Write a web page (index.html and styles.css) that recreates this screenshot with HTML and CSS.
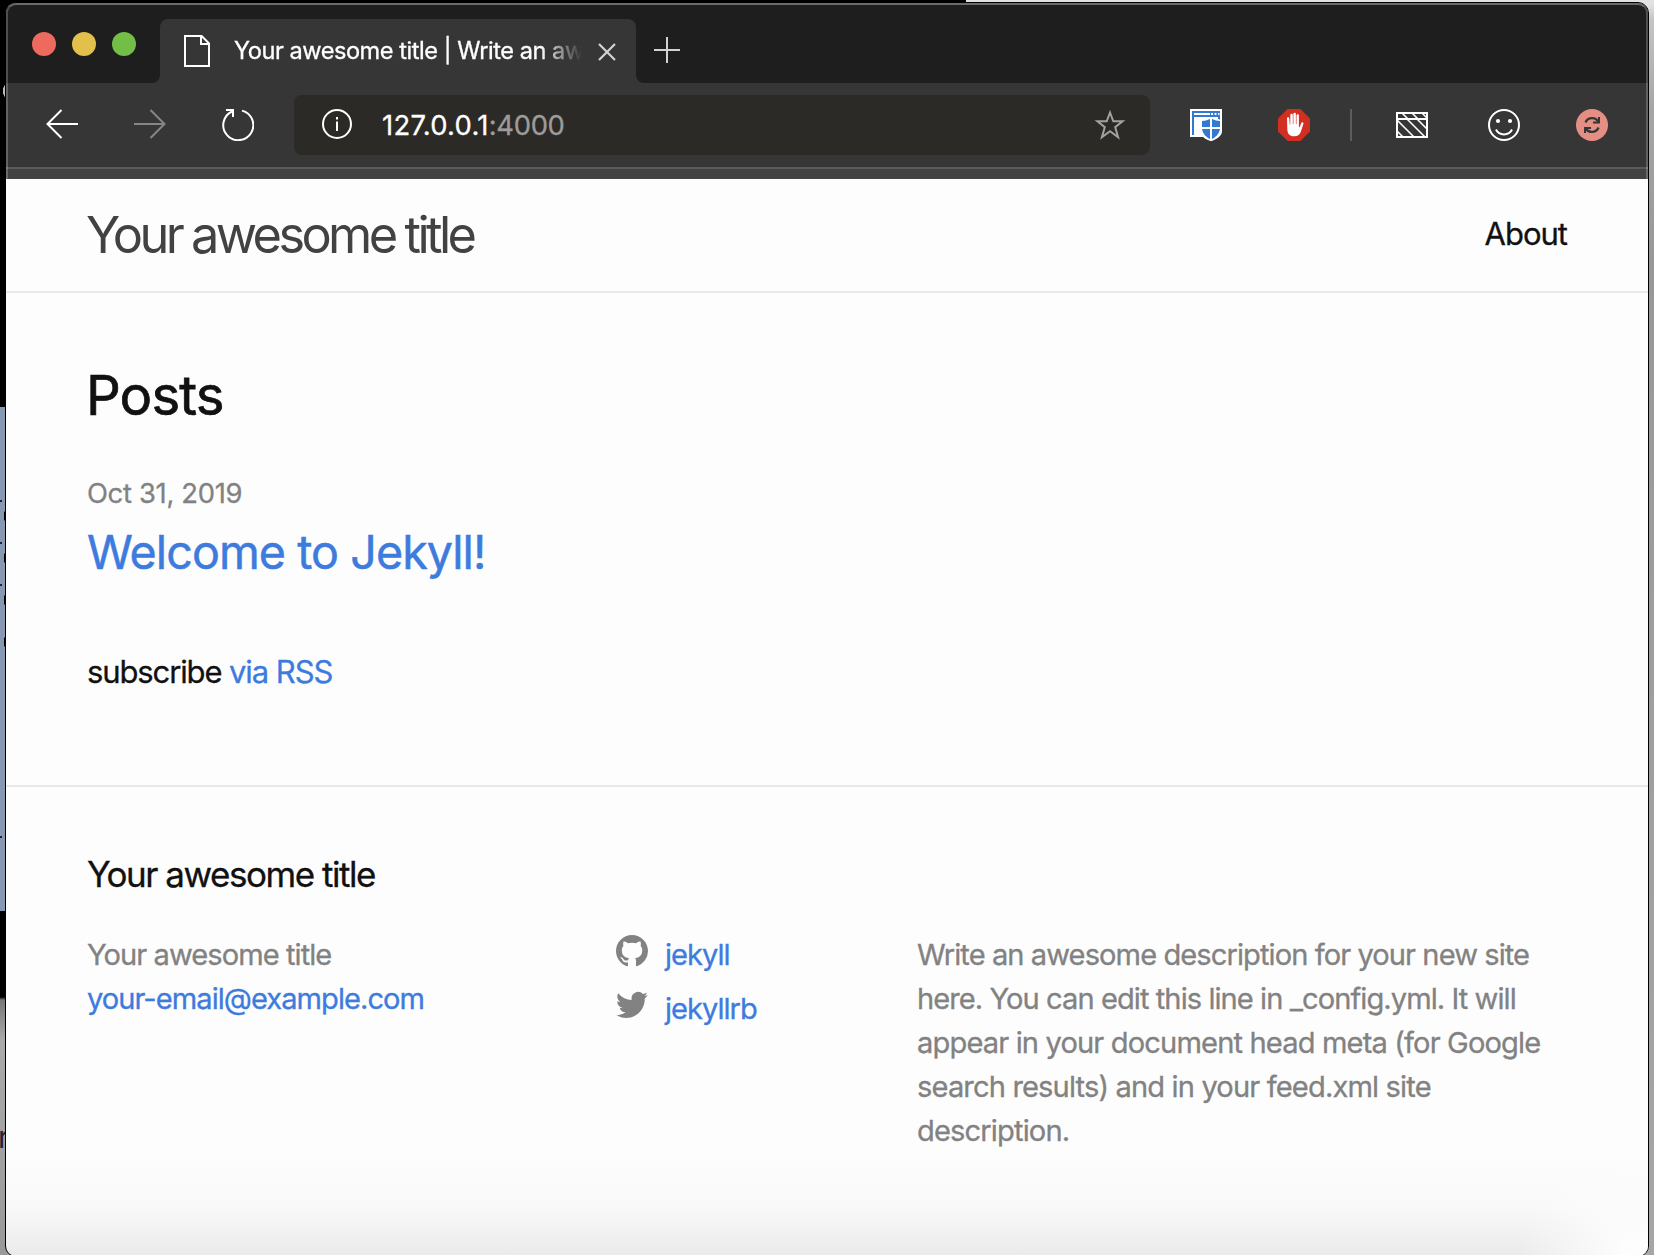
FILE: index.html
```html
<!DOCTYPE html>
<html lang="en">
<head>
<meta charset="utf-8">
<title>Your awesome title | Write an awesome description for your new site here.</title>
<link rel="stylesheet" href="styles.css">
</head>
<body>
<div class="backdrop-left"><span class="backdrop-text">r</span></div>
<div class="window">
  <div class="chrome">
    <div class="tabstrip">
      <div class="lights">
        <span class="light red"></span><span class="light yellow"></span><span class="light green"></span>
      </div>
      <div class="tab-slot">
        <div class="tab">
          <svg class="doc" width="26" height="32" viewBox="0 0 26 32" fill="none" stroke="#fff" stroke-width="2"><path d="M1 1h16.6L25 8.4V31H1z"/><path d="M17 1v8h8"/></svg>
          <span class="tab-title">Your awesome title | Write an aw</span>
          <svg class="close" width="18" height="18" viewBox="0 0 18 18" stroke="#d2d2d2" stroke-width="2.2"><path d="M1 1l16 16M17 1L1 17"/></svg>
        </div>
      </div>
      <div class="strip-rest">
        <svg width="26" height="26" viewBox="0 0 26 26" stroke="#d2d2d2" stroke-width="2"><path d="M13 0v26M0 13h26"/></svg>
      </div>
    </div>
    <div class="toolbar">
      <div class="nav">
        <svg width="32" height="32" viewBox="0 0 32 32" fill="none" stroke="#fff" stroke-width="2"><path d="M32 15H2M15.5 1L1.5 15l14 14"/></svg>
        <svg width="32" height="32" viewBox="0 0 32 32" fill="none" stroke="#868686" stroke-width="2"><path d="M0 15h30M16.500 1l14 14-14 14"/></svg>
        <svg width="32" height="32" viewBox="0 0 32 32" fill="none" stroke="#fff" stroke-width="2"><path d="M20 1.600A15 15 0 1 1 10 2.500"/><path d="M4 1h7v7"/></svg>
      </div>
      <div class="address">
        <svg width="30" height="30" viewBox="0 0 30 30" fill="none" stroke="#fff" stroke-width="2"><circle cx="15" cy="15" r="14"/><path d="M15 12.500v9.500M15 8v2.500"/></svg>
        <span class="url">127.0.0.1<span class="port">:4000</span></span>
        <svg class="star" width="32" height="32" viewBox="0 0 32 32" fill="none" stroke="#a2a2a2" stroke-width="2"><path d="M16 3.500l3.300 8.800h9.300l-7.400 5.900 2.900 10L16 22.300l-8.100 5.900 2.900-10-7.400-5.900h9.300z"/></svg>
      </div>
      <svg class="guard" width="32" height="32" viewBox="0 0 32 32"><path fill="#fff" d="M0 0h32v22c0 5-5 8-11 10-4-1-7-3-8-4H0z"/><path fill="#363636" d="M0 28h13l3 4H0z"/><path fill="#3279d2" d="M2 2h28v9l-2-1V8H4v18H2z"/><path fill="#fff" d="M4 4h16v2H4zM21 4h2v2h-2zM24.500 4h2v2h-2zM28 4h1.500v2H28z"/><path fill="#fff" d="M4 8h9v18H4z"/><path fill="#fff" d="M2 26h11v2H2z"/><path fill="#fff" d="M21 8l11 3.500V20c0 6-5 10-11 12-6-2-11-6-11-12v-8.500z"/><path fill="#3279d2" d="M20 10v8h-8v-6c3 0 5-1 8-2zM22 10c3 1 5 2 8 2v6h-8zM12 20h8v10c-4-2-7-5-8-10zM22 20h8c-1 5-4 8-8 10z"/></svg>
      <svg class="stop" width="32" height="32" viewBox="0 0 32 32"><path fill="#d22e22" d="M9.500 0h13L32 9.500v13L22.500 32h-13L0 22.500v-13z"/><path fill="#fff" d="M9 9.500c0-1.700 2.200-1.700 2.300 0l.5 6h.5V6c0-1.800 2.500-1.800 2.500 0v9h.6V5c0-1.700 2.500-1.700 2.500 0v10h.6V6.500c0-1.700 2.400-1.700 2.400 0V18l.7.200 1.600-4c.6-1.500 2.600-1 2.200.6L23.100 22c-1 3.300-3.200 5.300-7 5.300-4.600 0-6.600-2.600-6.800-7z"/></svg>
      <span class="divider"></span>
      <svg class="hatch" width="32" height="26" viewBox="0 0 32 26" fill="none" stroke="#fff"><path stroke-width="2" d="M1 1h30v24H1zM1 7h30"/><path stroke-width="1.600" d="M6 1l6 6M16 1l6 6M26 1l5 5M1 19l6 6M1 8l17 17M11 7l18 18M21 7l10 10"/></svg>
      <svg class="smile" width="32" height="32" viewBox="0 0 32 32" fill="none" stroke="#fff" stroke-width="2"><circle cx="16" cy="16" r="15"/><path d="M8 20.500c3 6.500 13 6.500 16 0"/><circle cx="10" cy="12" r="2.100" fill="#fff" stroke="none"/><circle cx="22" cy="12" r="2.100" fill="#fff" stroke="none"/></svg>
      <svg class="sync" width="32" height="32" viewBox="0 0 32 32"><circle cx="16" cy="16" r="16" fill="#e58f84"/><g fill="none" stroke="#363636" stroke-width="2.300"><path d="M9.500 13.500c2-5 9-6 12.500-1.500"/><path d="M22.500 18.500c-2 5-9 6-12.500 1.500"/></g><path fill="#363636" d="M24 8v6.500h-7v-2h3.500l1.500-1.500V8zM8 24v-6h7v2h-3.500L10 21.500V24z"/></svg>
    </div>
    <div class="bookmarks"></div>
  </div>
  <div class="page">
    <header class="site-header">
      <a class="site-title">Your awesome title</a>
      <a class="about">About</a>
    </header>
    <main class="content">
      <h2 class="posts">Posts</h2>
      <span class="date">Oct 31, 2019</span>
      <h3 class="post-link">Welcome to Jekyll!</h3>
      <p class="subscribe">subscribe <a>via RSS</a></p>
    </main>
    <footer class="site-footer">
      <h2 class="footer-heading">Your awesome title</h2>
      <div class="columns">
        <div class="contact"><span class="name">Your awesome title</span><a class="email">your-email@example.com</a></div>
        <ul class="social">
          <li><svg width="32" height="32" viewBox="0 0 16 16" fill="#828282"><path d="M8 0C3.580 0 0 3.580 0 8c0 3.540 2.290 6.530 5.470 7.590.4.070.55-.17.55-.38 0-.19-.01-.82-.01-1.490-2.010.37-2.530-.49-2.690-.94-.09-.23-.48-.94-.82-1.130-.28-.15-.68-.52-.01-.53.63-.01 1.080.58 1.230.82.72 1.210 1.870.87 2.330.66.07-.52.28-.87.51-1.070-1.780-.2-3.640-.89-3.640-3.950 0-.87.31-1.590.82-2.150-.08-.2-.36-1.020.08-2.120 0 0 .67-.21 2.200.82.64-.18 1.320-.27 2-.27.68 0 1.360.09 2 .27 1.530-1.040 2.200-.82 2.200-.82.44 1.100.16 1.920.08 2.120.51.56.82 1.270.82 2.150 0 3.070-1.870 3.750-3.650 3.950.29.25.54.73.54 1.480 0 1.070-.01 1.930-.01 2.200 0 .21.15.46.55.38A8.013 8.013 0 0 0 16 8c0-4.420-3.580-8-8-8z"/></svg><a>jekyll</a></li>
          <li><svg width="32" height="32" viewBox="0 .5 16 16" fill="#828282"><path d="M5.026 15c6.038 0 9.341-5.003 9.341-9.334 0-.14 0-.282-.006-.422A6.685 6.685 0 0 0 16 3.542a6.658 6.658 0 0 1-1.889.518 3.301 3.301 0 0 0 1.447-1.817 6.533 6.533 0 0 1-2.087.793A3.286 3.286 0 0 0 7.875 6.030a9.325 9.325 0 0 1-6.767-3.429 3.289 3.289 0 0 0 1.018 4.382A3.323 3.323 0 0 1 .64 6.575v.045a3.288 3.288 0 0 0 2.632 3.218 3.203 3.203 0 0 1-.865.115 3.230 3.230 0 0 1-.614-.057 3.283 3.283 0 0 0 3.067 2.277A6.588 6.588 0 0 1 .78 13.580a6.320 6.320 0 0 1-.78-.045A9.344 9.344 0 0 0 5.026 15z"/></svg><a>jekyllrb</a></li>
        </ul>
        <p class="description"><span>Write an awesome description for your new site</span> <span>here. You can edit this line in _config.yml. It will</span> <span>appear in your document head meta (for Google</span> <span>search results) and in your feed.xml site</span> <span>description.</span></p>
      </div>
    </footer>
  </div>
</div>
<div class="backdrop-right"></div>
</body>
</html>
```
FILE: styles.css
```css
* { box-sizing: border-box; margin: 0; padding: 0; }

body {
  display: grid;
  grid-template-columns: 5px 1644px 5px;
  width: 1654px;
  height: 1255px;
  overflow: hidden;
  font-family: Inter, "Liberation Sans", sans-serif;
  background: linear-gradient(90deg, #000 966px, #e2e2e2 966px) 0 0 / 100% 14px no-repeat,
    linear-gradient(90deg, #999 50%, #aaa 50%);
}
svg { display: block; flex: none; }
h2, h3 { font-weight: 400; }

/* desktop behind the window */
.backdrop-left {
  height: 1255px;
  padding-top: 1118px;
  background:
    radial-gradient(ellipse 2px 6px at 5px 91px, #bbb 90%, transparent) 0 0 / 5px 407px no-repeat,
    radial-gradient(ellipse 1.5px 5px at 5px 21px, #000 90%, transparent) 0 495px / 5px 42px no-repeat,
    radial-gradient(ellipse 1.5px 5px at 5px 21px, #000 90%, transparent) 0 537px / 5px 42px no-repeat,
    radial-gradient(ellipse 1.5px 5px at 5px 21px, #000 90%, transparent) 0 579px / 5px 42px no-repeat,
    radial-gradient(ellipse 1.5px 5px at 5px 21px, #000 90%, transparent) 0 621px / 5px 42px no-repeat,
    linear-gradient(#222, #222) 0 500px / 2px 2px no-repeat,
    linear-gradient(#222, #222) 0 542px / 2px 2px no-repeat,
    linear-gradient(#222, #222) 0 584px / 2px 2px no-repeat,
    linear-gradient(#222, #222) 0 836px / 2px 2px no-repeat,
    linear-gradient(#000 407px, #8798b3 407px 911px, #000 911px 997px, #777 1000px, #aaa 1040px, #999);
}
.backdrop-text { display: block; margin-left: -2px; font-size: 30px; line-height: 38px; color: #223; }
.backdrop-right { background: linear-gradient(#e2e2e2 4px, #c4c4c4 20px, #a5a5a5 110px, #989898 260px, #a6a6a6); }

.window {
  position: relative;
  margin-top: 2px;
  height: 1255px;
  border: 1px solid #000;
  border-radius: 11px;
  overflow: hidden;
  background: #fdfdfd;
}

/* browser chrome */
.chrome { position: relative; background: #363636; }
.chrome::after {
  content: "";
  position: absolute;
  inset: 0;
  border: 2px solid rgba(255, 255, 255, .22);
  border-top-color: rgba(255, 255, 255, .34);
  border-bottom: 0;
  border-radius: 10px 10px 0 0;
  pointer-events: none;
}
.tabstrip { display: flex; height: 80px; }
.lights {
  display: flex;
  gap: 16px;
  width: 154px;
  padding: 29px 0 0 26px;
  background: #1e1e1e;
  border-bottom-right-radius: 8px;
}
.light { width: 24px; height: 24px; border-radius: 50%; }
.red { background: #ee6a5f; }
.yellow { background: #e1c04c; }
.green { background: #72be47; }
.tab-slot { width: 476px; padding-top: 16px; background: #1e1e1e; }
.tab {
  display: flex;
  height: 64px;
  padding-left: 24px;
  background: #363636;
  border-radius: 8px 8px 0 0;
}
.doc { margin-top: 16px; }
.tab-title {
  width: 349px;
  margin-left: 24px;
  white-space: nowrap;
  font-size: 23.6px;
  line-height: 63px;
  letter-spacing: -.47px;
  color: #fff;
  -webkit-text-stroke: .3px;
  -webkit-mask-image: linear-gradient(90deg, #000 306px, transparent 348px);
  mask-image: linear-gradient(90deg, #000 306px, transparent 348px);
}
.close { margin: 24px 0 0 15px; }
.strip-rest { flex: 1; padding: 34px 0 0 18px; background: #1e1e1e; border-bottom-left-radius: 8px; }

.toolbar { display: flex; align-items: flex-start; height: 84px; padding: 26px 0 0 40px; }
.nav { display: flex; gap: 56px; }
.address {
  display: flex;
  width: 856px;
  height: 60px;
  margin: -14px 0 0 40px;
  padding: 14px 24px 0 28px;
  background: #2c2a26;
  border-radius: 8px;
}
.url {
  flex: 1;
  margin-left: 30px;
  font-size: 27.4px;
  line-height: 32px;
  letter-spacing: .28px;
  color: #fff;
  -webkit-text-stroke: .3px;
}
.port { letter-spacing: -.3px; color: #9c9c9a; }
.guard { margin-left: 40px; }
.stop { margin-left: 56px; }
.divider { width: 2px; height: 32px; margin-left: 40px; background: #5c5c5c; }
.hatch { margin: 3px 0 0 44px; }
.smile { margin-left: 60px; }
.sync { margin-left: 56px; }
.bookmarks { height: 12px; border-top: 2px solid #5a5a5a; background: #424242; }

/* page */
.page {
  height: 1080px;
  color: #111;
  background:
    radial-gradient(ellipse 130px 110px at 100% 100%, #fdfdfd 20%, rgba(253, 253, 253, 0)) no-repeat,
    linear-gradient(transparent 975px, rgba(0, 0, 0, .02) 1030px, rgba(0, 0, 0, .075) 1078px);
}
.page a { color: #3d7bdd; }
.site-header {
  display: flex;
  justify-content: space-between;
  height: 114px;
  padding: 0 81px 0 80px;
  border-bottom: 2px solid #e8e8e8;
}
.page .site-title { font-size: 50.5px; line-height: 112px; letter-spacing: -3.63px; word-spacing: -.5px; color: #424242; }
.page .about { font-size: 31px; line-height: 109px; letter-spacing: -1px; color: #111; -webkit-text-stroke: .3px; }
.content { height: 492px; padding: 60px 81px 0; }
.posts { margin-left: -1px; font-size: 54.5px; line-height: 84px; letter-spacing: -.9px; -webkit-text-stroke: .7px; }
.date { display: block; margin-top: 36px; font-size: 27.4px; line-height: 40px; letter-spacing: -.32px; color: #828282; -webkit-text-stroke: .3px; }
.post-link {
  margin-top: 3px;
  font-size: 46.6px;
  line-height: 72px;
  letter-spacing: -.93px;
  color: #3d7bdd;
  -webkit-text-stroke: .5px;
}
.subscribe { margin-top: 59px; font-size: 31px; line-height: 50px; letter-spacing: -1.12px; -webkit-text-stroke: .3px; }
.subscribe a { letter-spacing: -1.05px; }
.site-footer { height: 474px; padding: 60px 81px 0; border-top: 2px solid #e8e8e8; }
.footer-heading { font-size: 35px; line-height: 54px; letter-spacing: -1.48px; -webkit-text-stroke: .3px; }
.columns {
  display: grid;
  grid-template-columns: 529px 301px 1fr;
  margin-top: 31px;
  font-size: 29.1px;
  line-height: 44px;
  letter-spacing: -.95px;
  color: #828282;
  -webkit-text-stroke: .3px;
}
.contact, .description { padding-top: 1px; }
.contact { display: flex; flex-direction: column; }
.email { letter-spacing: -.97px; }
.social { list-style: none; letter-spacing: -1px; }
.social li { display: flex; gap: 17px; margin-bottom: 9px; }
.social a { padding-top: 1px; }
.social svg { margin-top: 3px; stroke: none; }
.description span { display: block; white-space: nowrap; letter-spacing: -.86px; }
.description span:nth-child(1) { letter-spacing: -.93px; }
.description span:nth-child(2) { letter-spacing: -.94px; }
```
